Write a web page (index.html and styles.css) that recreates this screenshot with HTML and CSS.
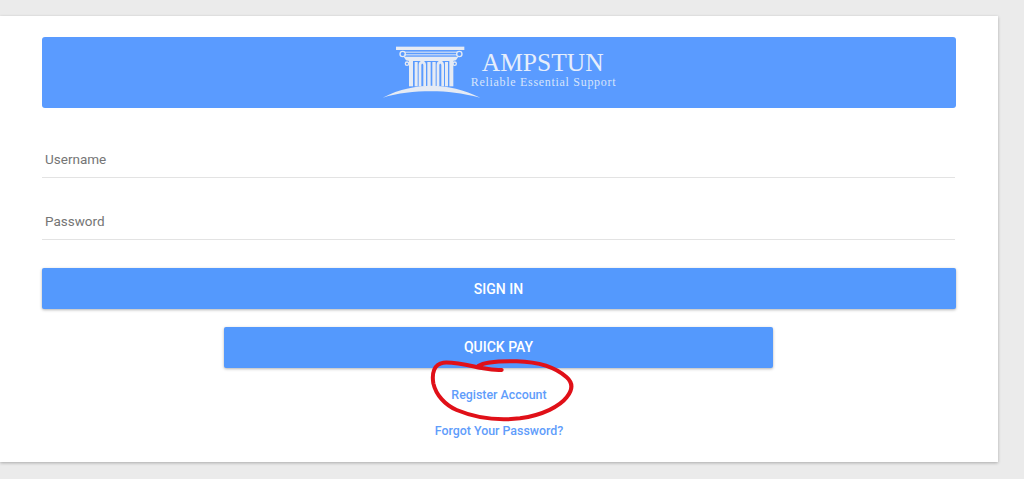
FILE: index.html
```html
<!DOCTYPE html>
<html lang="en">
<head>
<meta charset="utf-8">
<title>Ampstun</title>
<link rel="stylesheet" href="styles.css">
</head>
<body>
<main class="card">
  <header class="banner">
    <svg class="logo" width="100" height="60" viewBox="0 0 300 180" aria-hidden="true">
      <g fill="#e6ebf4">
        <rect x="45" y="14" width="205" height="10"/>
        <rect x="70" y="29" width="158" height="3"/>
        <rect x="70" y="37" width="158" height="3"/>
        <path d="M68 44h164l-7 11-10 2H85l-10-2z"/>
        <rect x="84" y="55" width="12" height="78"/>
        <rect x="101" y="60" width="9" height="73"/>
        <path d="M113 133V68c0-8 5-12 11-12s11 4 11 12v65h-8V70c0-3-1-5-3-5s-3 2-3 5v63z"/>
        <rect x="139" y="60" width="10" height="73"/>
        <rect x="154" y="60" width="10" height="73"/>
        <path d="M167 133V68c0-8 5-12 11-12s11 4 11 12v65h-8V70c0-3-1-5-3-5s-3 2-3 5v63z"/>
        <rect x="192" y="60" width="9" height="73"/>
        <rect x="205" y="55" width="12" height="78"/>
        <path d="M5 167C55 140 110 131 150 131c50 0 100 12 148 36-58-14-98-19-148-19-50 0-100 5-145 19z"/>
      </g>
      <g fill="none" stroke="#e6ebf4" stroke-width="4">
        <circle cx="65" cy="36" r="8"/>
        <circle cx="235" cy="36" r="8"/>
        <circle cx="78" cy="65" r="5"/>
        <circle cx="221" cy="65" r="5"/>
      </g>
    </svg>
    <div class="brand">
      <span class="brand-name">AMPSTUN</span>
      <span class="brand-tag">Reliable Essential Support</span>
    </div>
  </header>
  <form class="form">
    <label class="field">Username</label>
    <label class="field">Password</label>
    <button class="btn btn-wide" type="button">SIGN IN</button>
    <button class="btn btn-mid" type="button">QUICK PAY</button>
    <a class="link link-register" href="#">Register Account</a>
    <a class="link" href="#">Forgot Your Password?</a>
  </form>
</main>
<svg class="scribble" width="170" height="95" viewBox="0 0 510 285" aria-hidden="true">
  <path d="M175 48C195 35 240 33 290 34 360 36 410 55 440 82 460 100 458 120 440 142 420 168 370 195 300 205 240 212 170 205 110 180 75 165 48 135 40 100 35 70 42 42 70 38 110 35 160 50 190 55 210 59 230 61 245 60" fill="none" stroke="#e01018" stroke-width="12" stroke-linecap="round" stroke-linejoin="round"/>
</svg>
</body>
</html>
```
FILE: styles.css
```css
html, body {
  margin: 0;
  height: 479px;
  overflow: hidden;
  background: #ebebeb;
  font-family: Roboto, "Liberation Sans", sans-serif;
}
body {
  position: relative;
  padding-top: 16px;
  box-sizing: border-box;
}
.card {
  box-sizing: border-box;
  width: 998px;
  height: 446px;
  padding: 21px 42px 0;
  background: #fff;
  box-shadow: 0 1px 3px rgba(0, 0, 0, 0.28);
}
.banner {
  display: flex;
  justify-content: center;
  align-items: flex-start;
  box-sizing: border-box;
  height: 71px;
  padding: 5px 1px 0 0;
  background: #5a9bff;
  border-radius: 3px;
}
.logo {
  flex: none;
  margin-right: -10px;
}
.brand {
  display: flex;
  flex-direction: column;
  margin-top: 7px;
  color: #e6eefb;
  font-family: "Liberation Serif", serif;
}
.brand-name {
  padding-left: 11px;
  font-size: 25.500px;
  line-height: 28px;
}
.brand-tag {
  color: #d6e4fb;
  font-size: 12px;
  line-height: 11px;
  letter-spacing: 0.7px;
  white-space: nowrap;
}
.form {
  display: flex;
  flex-direction: column;
  align-items: center;
}
.field {
  box-sizing: border-box;
  align-self: flex-start;
  width: 913px;
  height: 45px;
  padding: 16px 0 0 3px;
  color: #757575;
  font-size: 13.500px;
  line-height: 20px;
  border-bottom: 1px solid #e3e3e3;
}
.field:first-child {
  margin-top: 25px;
}
.field + .field {
  margin-top: 17px;
}
.btn {
  display: block;
  height: 41px;
  padding: 0;
  border: 0;
  border-radius: 2px;
  background: #5499fd;
  color: #fff;
  font-family: inherit;
  font-size: 14px;
  font-weight: 500;
  box-shadow: 0 1px 3px rgba(0, 0, 0, 0.3);
}
.btn-wide {
  width: 100%;
  margin-top: 28px;
  padding-right: 1px;
}
.btn-mid {
  width: 549px;
  margin: 18px 1px 0 0;
  padding-bottom: 2px;
}
.link {
  color: #5f9dfb;
  font-size: 12.400px;
  font-weight: 500;
  line-height: 16px;
  text-decoration: none;
}
.link-register {
  margin-top: 19px;
  margin-bottom: 20px;
}
.scribble {
  position: absolute;
  left: 420px;
  top: 350px;
}
```
